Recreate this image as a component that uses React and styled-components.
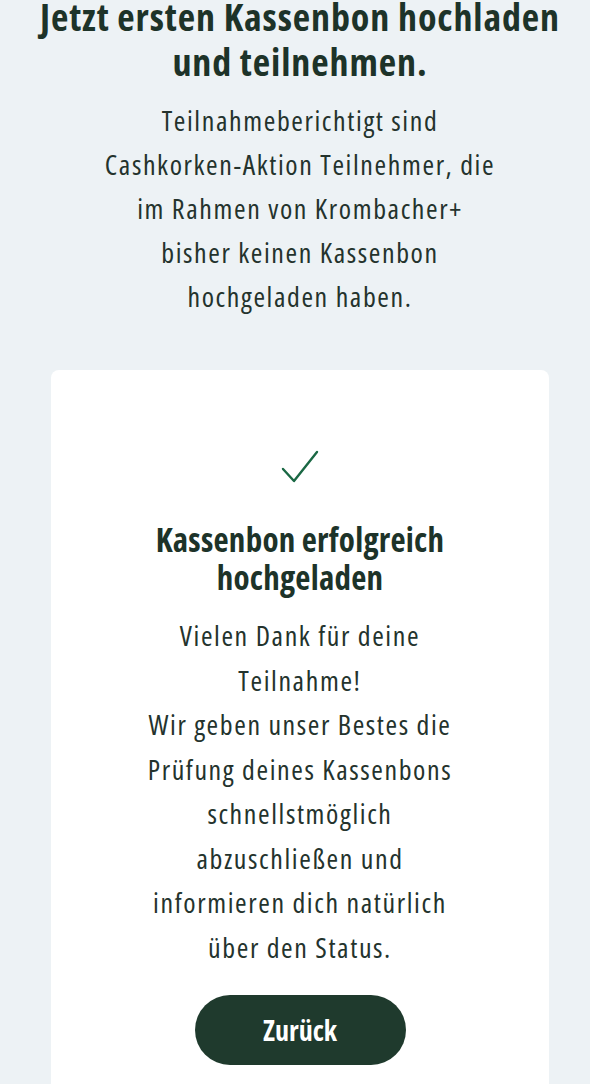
import React from "react";
import styled, { createGlobalStyle } from "styled-components";

const GlobalStyle = createGlobalStyle`
  html, body {
    margin: 0;
    padding: 0;
    background: #edf2f5;
  }
  body {
    font-family: "Open Sans", "DejaVu Sans Condensed", sans-serif;
    font-stretch: 75%;
    color: #1d3329;
  }
`;

const Page = styled.main`
  display: flex;
  flex-direction: column;
  align-items: center;
  padding: 0 41px 0 51px;
  overflow: hidden;
`;

const Headline = styled.h1`
  margin: -6px -40px 0;
  font-size: 38px;
  line-height: 45px;
  font-weight: 700;
  letter-spacing: 0.9px;
  text-align: center;
  white-space: nowrap;
  color: #1d3329;
`;

const Intro = styled.p`
  margin: 14px 0 0;
  font-size: 28px;
  line-height: 44px;
  letter-spacing: 1.6px;
  text-align: center;
  color: #24332d;
`;

// White card holding the upload confirmation
const Card = styled.section`
  align-self: stretch;
  margin-top: 52px;
  background: #ffffff;
  border-radius: 8px;
  padding: 80px 20px 40px;
  display: flex;
  flex-direction: column;
  align-items: center;
  min-height: 740px;
  box-sizing: border-box;
`;

const CheckIcon = styled.svg`
  width: 38px;
  height: 34px;
  display: block;
`;

const CardTitle = styled.h2`
  margin: 37px 0 0;
  font-size: 33px;
  line-height: 38px;
  font-weight: 700;
  letter-spacing: 0.25px;
  text-align: center;
  color: #1d3329;
`;

const CardText = styled.p`
  margin: 16px 0 0;
  font-size: 28px;
  line-height: 44.5px;
  letter-spacing: 1.6px;
  text-align: center;
  color: #24332d;
`;

const BackButton = styled.button`
  margin-top: 26px;
  width: 211px;
  height: 70px;
  border: none;
  border-radius: 35px;
  background: #1f3a2d;
  color: #ffffff;
  font-family: inherit;
  font-stretch: 87.5%;
  font-size: 28px;
  font-weight: 700;
  cursor: pointer;
`;

export default function App() {
  return (
    <>
      <GlobalStyle />
      <Page>
        <Headline>
          Jetzt ersten Kassenbon hochladen
          <br />
          und teilnehmen.
        </Headline>
        <Intro>
          Teilnahmeberichtigt sind
          <br />
          Cashkorken-Aktion Teilnehmer, die
          <br />
          im Rahmen von Krombacher+
          <br />
          bisher keinen Kassenbon
          <br />
          hochgeladen haben.
        </Intro>
        <Card>
          <CheckIcon viewBox="0 0 38 34" fill="none">
            <path
              d="M2 19 L13 31 L36 2"
              stroke="#1a6844"
              strokeWidth="2.4"
              strokeLinecap="round"
              strokeLinejoin="round"
            />
          </CheckIcon>
          <CardTitle>
            Kassenbon erfolgreich
            <br />
            hochgeladen
          </CardTitle>
          <CardText>
            Vielen Dank für deine
            <br />
            Teilnahme!
            <br />
            Wir geben unser Bestes die
            <br />
            Prüfung deines Kassenbons
            <br />
            schnellstmöglich
            <br />
            abzuschließen und
            <br />
            informieren dich natürlich
            <br />
            über den Status.
          </CardText>
          <BackButton>Zurück</BackButton>
        </Card>
      </Page>
    </>
  );
}
